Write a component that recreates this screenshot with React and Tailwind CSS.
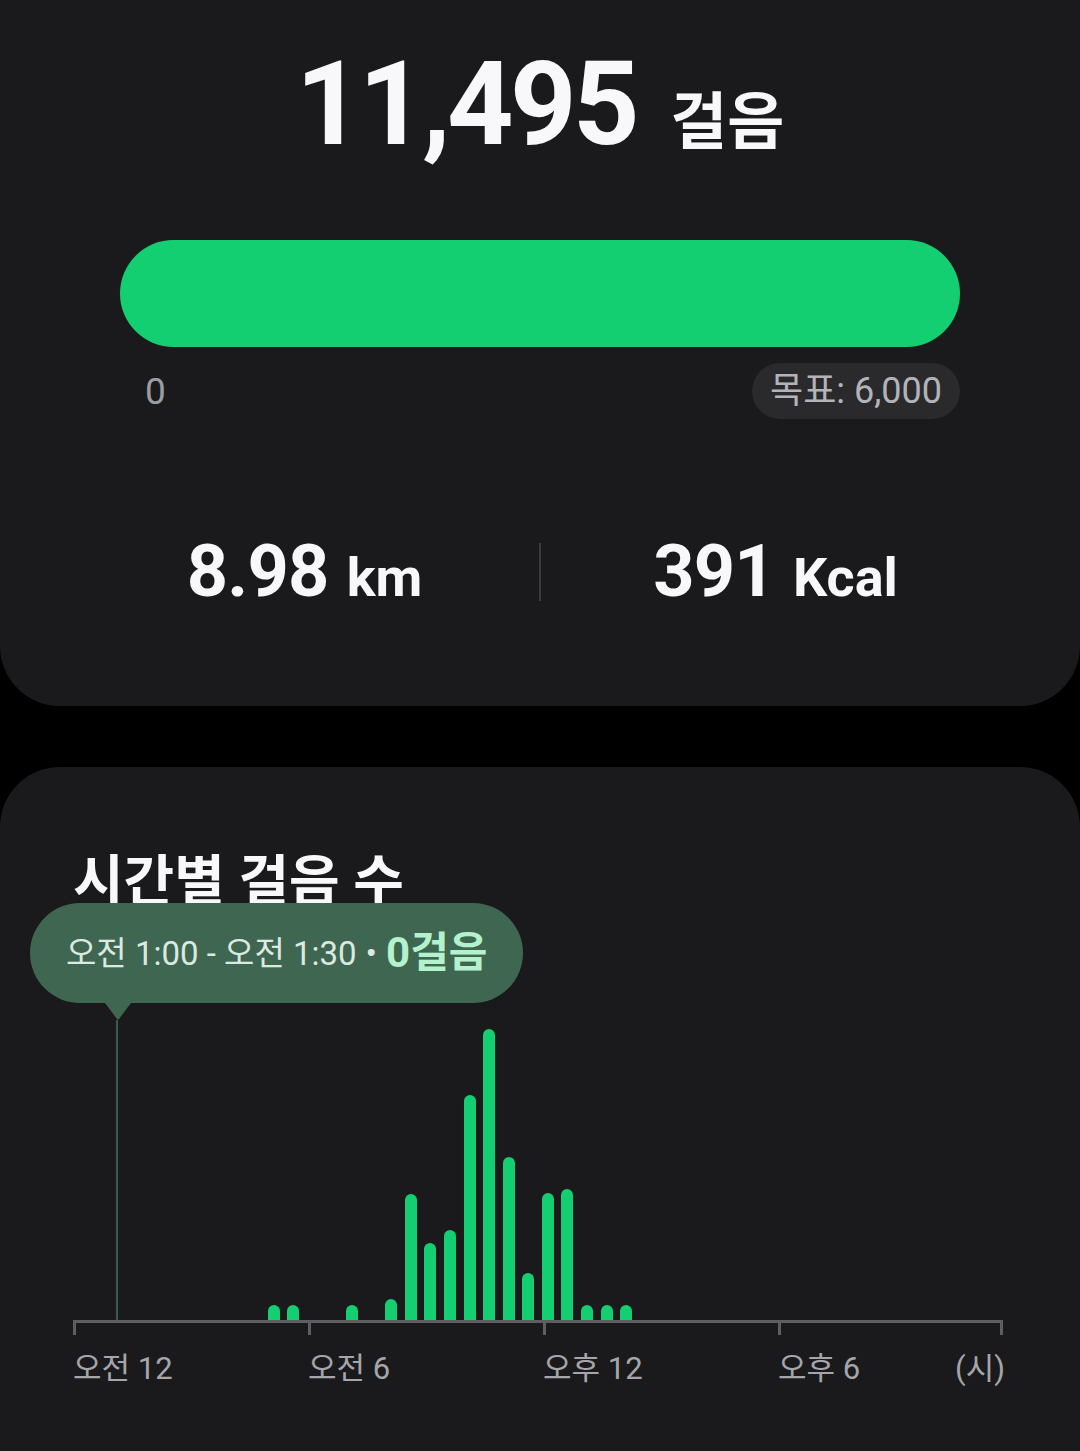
import React from 'react';

const stepsBySlot = {
  10: 15, 11: 15, 14: 15, 16: 21, 17: 126, 18: 77, 19: 90, 20: 225,
  21: 291, 22: 163, 23: 47, 24: 127, 25: 131, 26: 15, 27: 15, 28: 15,
};

const slots = Array.from({ length: 48 }, (_, i) => stepsBySlot[i] || 0);

function SummaryCard() {
  return (
    <section className="h-[706px] bg-[#1a1a1c] rounded-b-[60px] flex flex-col">
      {/* Total steps */}
      <div className="flex justify-center items-baseline pt-[46px]">
        <span className="text-[116px] leading-none font-bold tracking-[-0.03em] text-[#f8f8fa]">11,495</span>
        <span className="ml-[34px] text-[62px] leading-none font-bold text-[#f8f8fa]">걸음</span>
      </div>

      {/* Progress */}
      <div className="mx-[120px] mt-[78px] h-[107px] rounded-full bg-[#13cf72]" />
      <div className="mx-[120px] mt-[16px] flex items-center justify-between">
        <span className="pl-[25px] text-[37px] leading-none text-[#9d9da1]">0</span>
        <span className="h-[56px] px-[18px] flex items-center rounded-full bg-[#2a2a2d] text-[36px] leading-none text-[#b4b4b8]">
          목표: 6,000
        </span>
      </div>

      {/* Distance / calories */}
      <div className="mt-[117px] px-[70px] flex items-center">
        <div className="flex-1 flex justify-center items-baseline text-[#f8f8fa] font-bold">
          <span className="text-[72px] leading-none tracking-[-0.01em]">8.98</span>
          <span className="ml-[18px] text-[54px] leading-none">km</span>
        </div>
        <div className="w-[2px] h-[58px] bg-[#3a3a3d]" />
        <div className="flex-1 flex justify-center items-baseline text-[#f8f8fa] font-bold">
          <span className="text-[72px] leading-none tracking-[-0.01em]">391</span>
          <span className="ml-[18px] text-[54px] leading-none">Kcal</span>
        </div>
      </div>
    </section>
  );
}

function HourlyCard() {
  return (
    <section className="relative mt-[61px] h-[684px] bg-[#1a1a1c] rounded-t-[60px] pl-[73px] pt-[82px]">
      <h2 className="text-[55px] leading-[64px] font-bold text-[#f8f8fa]">시간별 걸음 수</h2>

      {/* Bars */}
      <div className="mt-[107px] h-[300px] grid grid-cols-[repeat(48,19.58px)] items-end">
        {slots.map((v, i) => (
          <div key={i} className="h-full flex items-end">
            {v > 0 && (
              <div
                className="-ml-px w-[12px] rounded-t-full bg-[#13cf72]"
                style={{ height: v }}
              />
            )}
          </div>
        ))}
      </div>

      {/* Axis */}
      <div className="w-[930px] flex border-t-[3px] border-[#5e5e62]">
        <div className="w-[235px] h-[12px] border-l-[3px] border-[#5e5e62]" />
        <div className="w-[235px] h-[12px] border-l-[3px] border-[#5e5e62]" />
        <div className="w-[235px] h-[12px] border-l-[3px] border-[#5e5e62]" />
        <div className="flex-1 h-[12px] border-x-[3px] border-[#5e5e62]" />
      </div>
      <div className="w-[932px] mt-[14px] flex text-[31px] leading-[40px] text-[#a6a6aa]">
        <span className="w-[235px] shrink-0">오전 12</span>
        <span className="w-[235px] shrink-0">오전 6</span>
        <span className="w-[235px] shrink-0">오후 12</span>
        <div className="flex-1 flex justify-between">
          <span>오후 6</span>
          <span>(시)</span>
        </div>
      </div>

      {/* Selected slot tooltip */}
      <div className="absolute left-[116px] top-[253px] w-[2px] h-[300px] bg-[#3b5a4a]" />
      <div className="absolute left-[30px] top-[136px]">
        <div className="h-[100px] pl-[36px] pr-[36px] flex items-center rounded-full bg-[#3f6651]">
          <span className="text-[33px] leading-none text-[#dce9e0]">오전 1:00 - 오전 1:30</span>
          <span className="mx-[9px] text-[34px] leading-none text-[#dce9e0]">•</span>
          <span className="text-[42px] leading-none font-bold text-[#b3f2cc]">0걸음</span>
        </div>
        <svg className="ml-[75px] block" width="26" height="17" viewBox="0 0 26 17">
          <path d="M0 0 L26 0 L14 16 Q13 17 12 16 Z" fill="#3f6651" />
        </svg>
      </div>
    </section>
  );
}

export default function App() {
  return (
    <div className="min-h-screen bg-black overflow-hidden font-[Roboto,'Noto_Sans_CJK_KR',sans-serif]">
      <SummaryCard />
      <HourlyCard />
    </div>
  );
}
